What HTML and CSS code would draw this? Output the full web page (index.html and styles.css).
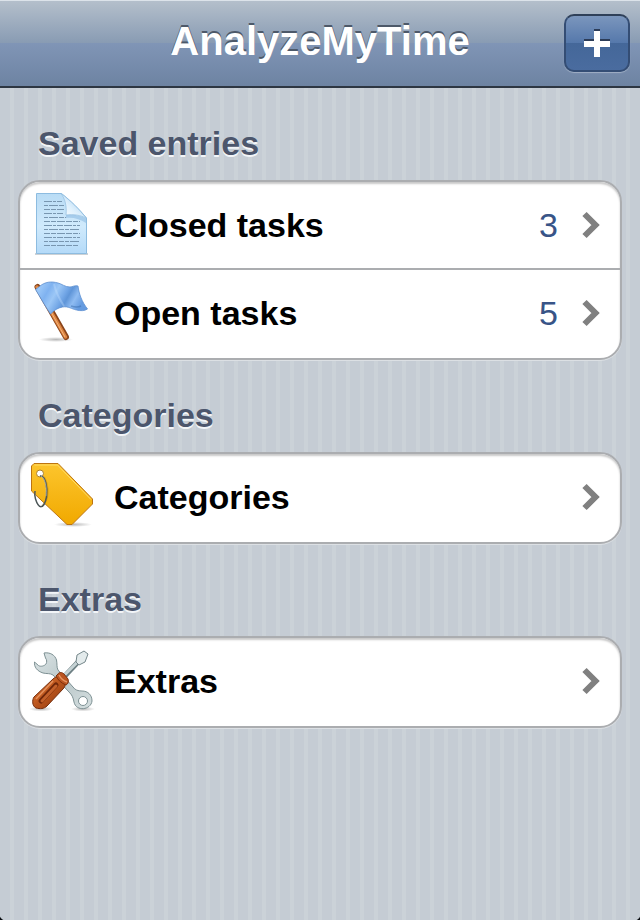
FILE: index.html
```html
<!DOCTYPE html>
<html lang="en">
<head>
<meta charset="utf-8">
<meta name="viewport" content="width=device-width, initial-scale=1">
<title>AnalyzeMyTime</title>
<link rel="stylesheet" href="styles.css">
</head>
<body>
<header class="navbar">
  <h1 class="title">AnalyzeMyTime</h1>
  <button class="add" type="button" aria-label="Add entry">
    <svg class="plus" viewBox="0 0 26 28" aria-hidden="true">
      <path d="M10 0h6v10h10v6H16v10h-6V16H0v-6h10z" fill="#2c3c58"/>
      <path d="M10 2h6v10h10v6H16v10h-6V18H0v-6h10z" fill="#fff"/>
    </svg>
  </button>
</header>
<main>
  <section>
    <h2 class="heading">Saved entries</h2>
    <ul class="group">
      <li>
        <a class="row" href="#closed">
          <svg class="icon" viewBox="0 0 64 64" aria-hidden="true">
            <defs>
              <linearGradient id="paper" x1="0" y1="0" x2="0" y2="1"><stop offset="0" stop-color="#b9dcf5"/><stop offset=".55" stop-color="#d0eafc"/><stop offset="1" stop-color="#b4daf8"/></linearGradient>
              <linearGradient id="fold" x1="0" y1="1" x2="1" y2="0"><stop offset="0" stop-color="#fff"/><stop offset=".4" stop-color="#e0f1fd"/><stop offset="1" stop-color="#93c2e9"/></linearGradient>
            </defs>
            <path d="M5 61h53" stroke="#9aa3ab" stroke-width="1"/>
            <path d="M6.500.5h25C40 7 50 17 56.500 25v35.500h-50z" fill="url(#paper)" stroke="#8dbce0"/>
            <g stroke="#7896b0" stroke-width="1" fill="none">
              <path d="M14 8.500h18M14 20.500h19M14 32.500h36M14 44.500h36" stroke-dasharray="8 1 3 1 6 1"/>
              <path d="M14 12.500h20M14 24.500h22M14 36.500h35M14 48.500h36" stroke-dasharray="4 1 9 1 5 1"/>
              <path d="M14 16.500h20M14 28.500h36M14 40.500h36M14 52.500h35" stroke-dasharray="6 1 5 1 8 1"/>
            </g>
            <path d="M36 22c7-1 15 0 20 3.500V30c-6-4-13-6-20-5z" fill="#83b4dd" opacity=".5"/>
            <path d="M31 .5c4 5 6 13 5 21.500 7-1 15 0 20.500 3.500C50 17 40 7 31 .5z" fill="url(#fold)" stroke="#91bde0" stroke-width=".7"/>
          </svg>
          <span class="label">Closed tasks</span>
          <span class="count">3</span>
          <svg class="chevron" viewBox="0 0 18 28" aria-hidden="true"><path d="M2.500 3l11 11-11 11" fill="none" stroke="#808080" stroke-width="6"/></svg>
        </a>
      </li>
      <li>
        <a class="row" href="#open">
          <svg class="icon" viewBox="0 0 64 64" aria-hidden="true">
            <defs>
              <linearGradient id="cloth" x1="0" y1="0" x2="1" y2=".35"><stop offset="0" stop-color="#6ba3e6"/><stop offset=".12" stop-color="#9cc8f8"/><stop offset=".3" stop-color="#7fb2f0"/><stop offset=".45" stop-color="#9cc7f6"/><stop offset=".62" stop-color="#72a6e6"/><stop offset=".7" stop-color="#5f95d8"/><stop offset=".84" stop-color="#8fbcf2"/><stop offset="1" stop-color="#659be0"/></linearGradient>
              <radialGradient id="shade"><stop offset="0" stop-color="#000" stop-opacity=".28"/><stop offset="1" stop-color="#000" stop-opacity="0"/></radialGradient>
            </defs>
            <ellipse cx="26" cy="58.500" rx="17" ry="2.500" fill="url(#shade)"/>
            <path d="M7.500 6L36 56" stroke="#8b451b" stroke-width="6" stroke-linecap="round"/>
            <path d="M7 6l28.500 50" stroke="#dc8440" stroke-width="3.500" stroke-linecap="round"/>
            <path d="M7 6l28 50" stroke="#f4b37b" stroke-width="1"/>
            <path d="M5.500 8.500L10 5C15 1 21 0 28 2c4 1 7 4 12 4 2 0 5-2 8-1 1 8 4 16 9.500 23-3 2-7 2-11 1-5-1-8-4-14-3-5 1-8 3-12 7C15 25 10 16 5.500 8.500z" fill="url(#cloth)" stroke="#5d8fd0" stroke-width=".8"/>
            <path d="M24 3c2 9 6 16 10 22" stroke="#c4e0ff" stroke-width="2" opacity=".35" fill="none"/>
            <path d="M41 25c3 1 6 2 10 0" stroke="#376cad" stroke-width="1.500" opacity=".5" fill="none"/>
          </svg>
          <span class="label">Open tasks</span>
          <span class="count">5</span>
          <svg class="chevron" viewBox="0 0 18 28" aria-hidden="true"><path d="M2.500 3l11 11-11 11" fill="none" stroke="#808080" stroke-width="6"/></svg>
        </a>
      </li>
    </ul>
  </section>
  <section>
    <h2 class="heading">Categories</h2>
    <ul class="group">
      <li>
        <a class="row" href="#categories">
          <svg class="icon" viewBox="0 0 64 64" aria-hidden="true">
            <defs><linearGradient id="gold" x1="0" y1="0" x2="0" y2="1"><stop offset="0" stop-color="#fcc52d"/><stop offset="1" stop-color="#f1a900"/></linearGradient></defs>
            <ellipse cx="43" cy="59.500" rx="19" ry="2.500" fill="url(#shade)"/>
            <path d="M4-1.500h24L62.500 34v5L42 59.500h-5L1.500 26V1z" fill="url(#gold)" stroke="#bd7410" stroke-linejoin="round"/>
            <path d="M4.500 0h23L61 34.500" stroke="#ffdc66" stroke-width="1" fill="none"/>
            <circle cx="10" cy="8.500" r="3.500" fill="#fff" stroke="#ae812a"/>
            <path d="M14 12c5 9 5 24-2 29" stroke="#b77e00" stroke-width="2" opacity=".4" fill="none"/>
            <path d="M10 11c5-1 8 11 6.500 21C14 44 9 45 5.500 34c-1-3-1-5-.5-8" stroke="#4c5657" stroke-width="1.500" fill="none"/>
            <path d="M11 11c4 2 6 11 5 20" stroke="#bbc1bb" stroke-width=".7" fill="none"/>
          </svg>
          <span class="label">Categories</span>
          <svg class="chevron" viewBox="0 0 18 28" aria-hidden="true"><path d="M2.500 3l11 11-11 11" fill="none" stroke="#808080" stroke-width="6"/></svg>
        </a>
      </li>
    </ul>
  </section>
  <section>
    <h2 class="heading">Extras</h2>
    <ul class="group">
      <li>
        <a class="row" href="#extras">
          <svg class="icon" viewBox="0 0 64 64" aria-hidden="true">
            <defs>
              <linearGradient id="steel" x1="0" y1="0" x2="1" y2="1"><stop offset="0" stop-color="#dce5e6"/><stop offset=".5" stop-color="#bac7c9"/><stop offset="1" stop-color="#d5dfe0"/></linearGradient>
              <linearGradient id="grip" x1="0" y1="0" x2="1" y2="1"><stop offset=".2" stop-color="#d66e2e"/><stop offset=".5" stop-color="#b9541c"/><stop offset="1" stop-color="#8a360e"/></linearGradient>
            </defs>
            <ellipse cx="11" cy="60" rx="12" ry="2.500" fill="url(#shade)"/>
            <ellipse cx="53" cy="60" rx="12" ry="2.500" fill="url(#shade)"/>
            <path fill-rule="evenodd" d="M14 4c6-1 11 2 12.500 7 .8 4 0 7 1.500 10l15 17c2 3 5 4 9 4 6 0 10 4 10 10-1 9-16 11-18 1-1-5-2-7-5-10L23 26c-3-2-6-1-10-2C7 22 4 18 4.500 13l4 3.500c2 1.500 6 .5 7.500-1.500 1-2 1-4-.5-6zM53 47.500a4.500 4.500 0 110 9 4.500 4.500 0 010-9z" fill="url(#steel)" stroke="#7d9093" stroke-width="1" stroke-linejoin="round"/>
            <path d="M32 30l17-18" stroke="#6d7f83" stroke-width="5"/>
            <path d="M31.500 29L49 11.500" stroke="#c5d2d4" stroke-width="3"/>
            <path d="M46 13l1-7 7-4 4 3-3 8-6 3z" fill="#e4ebec" stroke="#75878b" stroke-linejoin="round"/>
            <path d="M23 30c3-3 7-3 10 0s3 7 0 10L17 57c-3 3-7 3-11 2-4-2-4-8-2-11z" fill="url(#grip)" stroke="#742d0c"/>
            <path d="M26 36L11 52" stroke="#702709" stroke-width="5" stroke-linecap="round"/>
            <path d="M26 37L12 52" stroke="#c2602a" stroke-width="3" stroke-linecap="round"/>
            <path d="M23 32L6 50" stroke="#e5915c" stroke-width="1.500"/>
            <path d="M28 25c1-2 4-2 6 0l4 5c1 3 0 5-2 6-5-2-8-5-10-9z" fill="#bb5420" stroke="#7e300c"/>
            <path d="M29 26c2 4 5 6 8 7" stroke="#e5925f" stroke-width="1.500" fill="none"/>
          </svg>
          <span class="label">Extras</span>
          <svg class="chevron" viewBox="0 0 18 28" aria-hidden="true"><path d="M2.500 3l11 11-11 11" fill="none" stroke="#808080" stroke-width="6"/></svg>
        </a>
      </li>
    </ul>
  </section>
</main>
</body>
</html>
```
FILE: styles.css
```css
* {
  box-sizing: border-box;
}

body {
  margin: 0;
  min-height: 100vh;
  font-family: "Liberation Sans", Arial, sans-serif;
  font-size: 34px;
  background:
    radial-gradient(circle at 100% 0, transparent 6px, #0a0d12 7px) left bottom / 6px 6px no-repeat,
    radial-gradient(circle at 0 0, transparent 6px, #0a0d12 7px) right bottom / 6px 6px no-repeat,
    repeating-linear-gradient(90deg, #c5ccd4 0, #c5ccd4 10px, #cbd2d8 10px, #cbd2d8 14px);
}

.navbar {
  display: grid;
  grid-template-columns: 66px 1fr 66px;
  align-items: center;
  height: 88px;
  padding: 0 10px 1px;
  border-top: 1px solid #dce3ea;
  border-bottom: 2px solid #2d3642;
  background: linear-gradient(#b4bfcb 0, #889bb3 50%, #8095b6 50%, #6d83a2 100%);
}

.title {
  grid-column: 2;
  margin: 0;
  padding-bottom: 4px;
  color: #fff;
  font-size: 40px;
  line-height: 48px;
  text-align: center;
  text-shadow: 0 -2px 0 #4d5969;
}

.add {
  display: flex;
  align-items: center;
  justify-content: center;
  height: 58px;
  padding: 0;
  border: 2px solid #344d74;
  border-top-color: #2f4059;
  border-radius: 10px;
  background: linear-gradient(#7b96bd 0, #5578ab 50%, #446799 50%, #4a6c9f 100%);
  box-shadow: 0 1px 1px #a1b0c5;
}

.plus {
  width: 26px;
  height: 28px;
}

.heading {
  height: 92px;
  margin: 0;
  padding: 35px 38px 0;
  color: #4c566c;
  font-size: 34px;
  line-height: 40px;
  text-shadow: 0 2px 0 #f2f5f8;
}

.group {
  margin: 0 18px;
  padding: 0;
  overflow: hidden;
  list-style: none;
  border: 2px solid #abadb0;
  border-radius: 22px;
  background: #fff;
  box-shadow: inset 0 2px 2px #c9c9c9, 0 1px 0 #dce0e4;
}

.group li + li {
  border-top: 2px solid #abadb0;
}

.row {
  display: flex;
  align-items: center;
  height: 88px;
  padding: 0 20px 2px 10px;
  color: #000;
  text-decoration: none;
}

.group li:first-child:not(:last-child) .row {
  height: 86px;
  padding-bottom: 0;
}

.icon {
  flex: none;
  width: 64px;
  height: 64px;
  overflow: visible;
}

.label {
  flex: 1;
  margin-left: 20px;
  font-weight: bold;
}

.count {
  margin-right: 24px;
  color: #385487;
}

.chevron {
  flex: none;
  width: 18px;
  height: 28px;
}
```
